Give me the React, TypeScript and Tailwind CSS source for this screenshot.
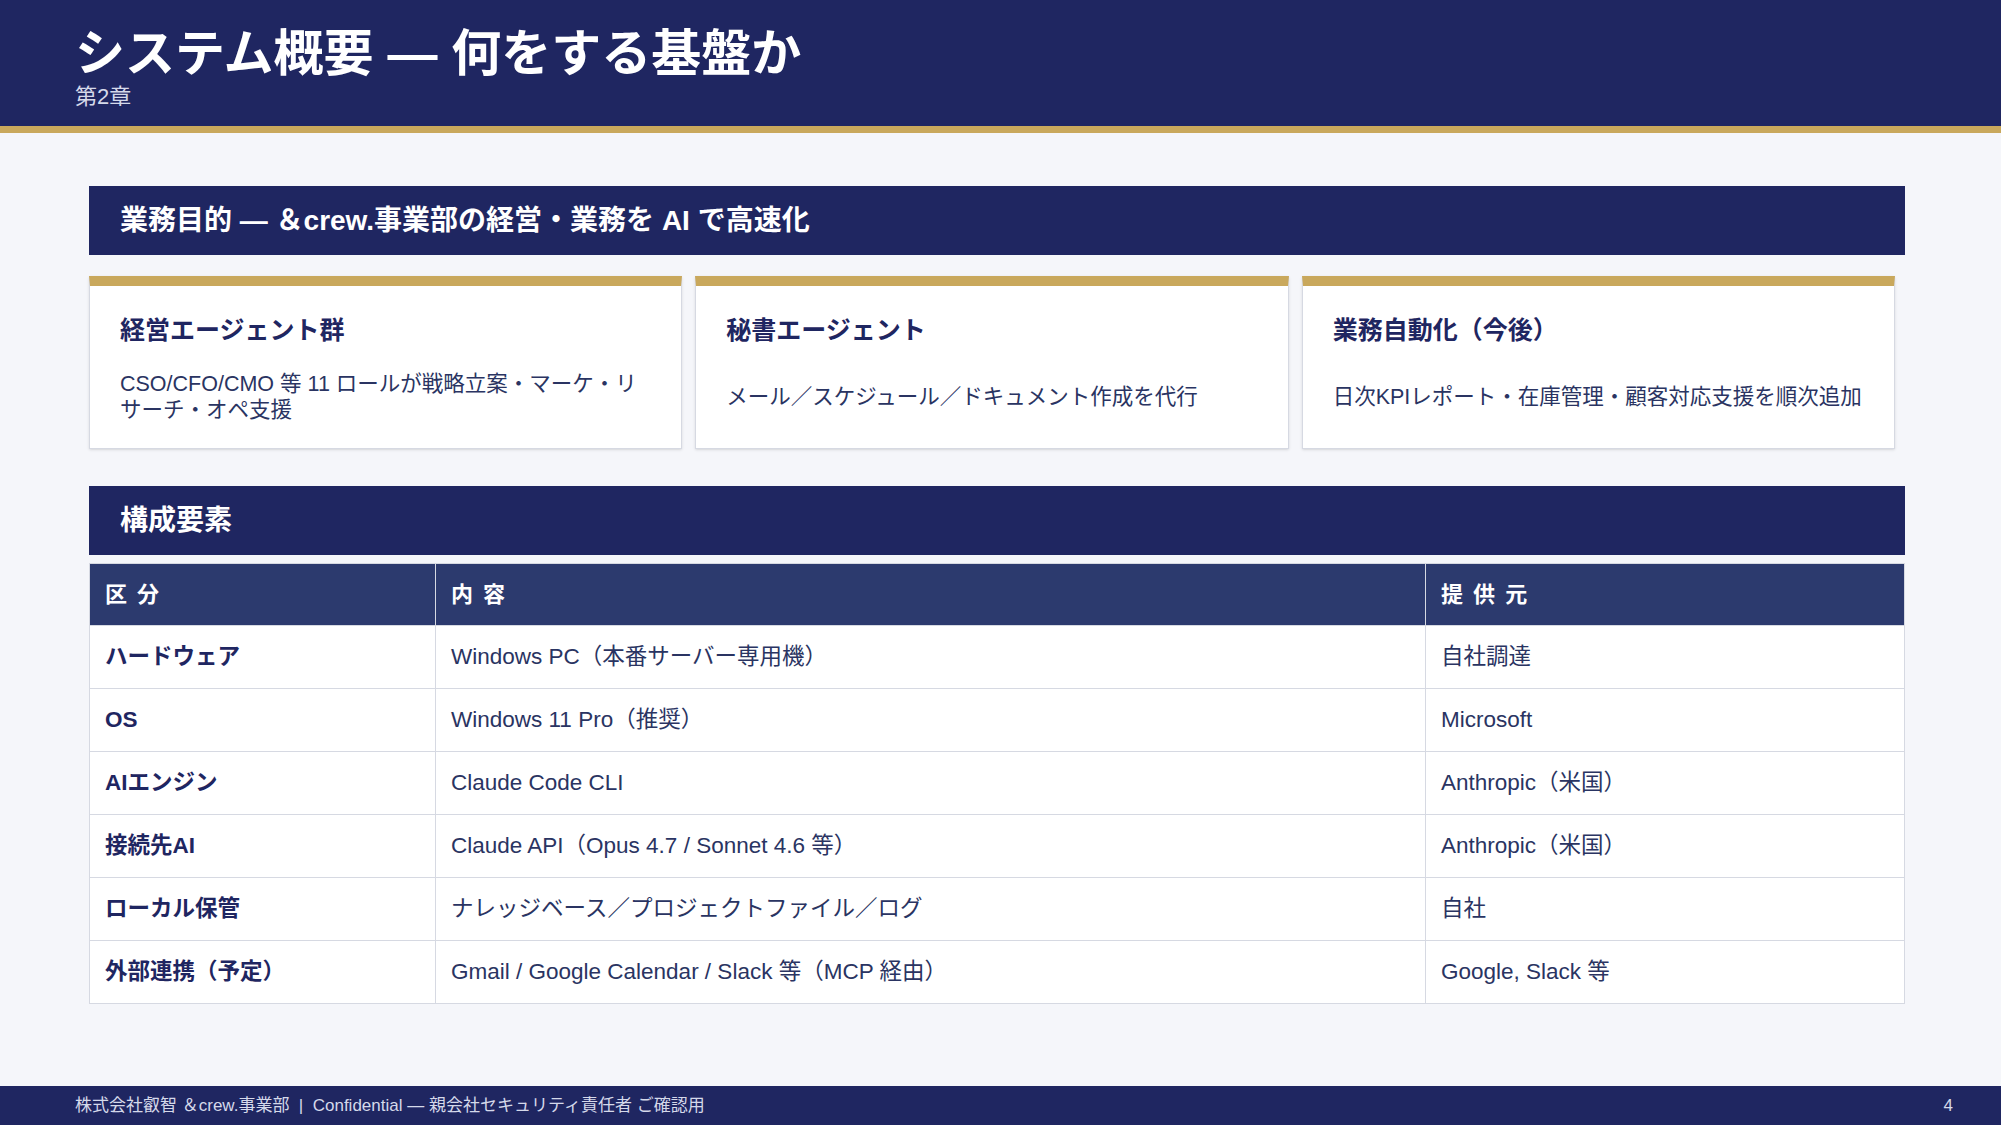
import React from "react";

const F = { fontFamily: '"Liberation Sans", "Noto Sans CJK JP", sans-serif' };

const cards = [
  { t: "経営エージェント群", b: "CSO/CFO/CMO 等 11 ロールが戦略立案・マーケ・リサーチ・オペ支援" },
  { t: "秘書エージェント", b: "メール／スケジュール／ドキュメント作成を代行" },
  { t: "業務自動化（今後）", b: "日次KPIレポート・在庫管理・顧客対応支援を順次追加" },
];

const rows = [
  ["ハードウェア", "Windows PC（本番サーバー専用機）", "自社調達"],
  ["OS", "Windows 11 Pro（推奨）", "Microsoft"],
  ["AIエンジン", "Claude Code CLI", "Anthropic（米国）"],
  ["接続先AI", "Claude API（Opus 4.7 / Sonnet 4.6 等）", "Anthropic（米国）"],
  ["ローカル保管", "ナレッジベース／プロジェクトファイル／ログ", "自社"],
  ["外部連携（予定）", "Gmail / Google Calendar / Slack 等（MCP 経由）", "Google, Slack 等"],
];

export default function App() {
  return (
    <div style={F} className="w-[2001px] h-[1125px] bg-[#f5f6fa] flex flex-col overflow-hidden">
      <header className="h-[126px] shrink-0 bg-[#1f2661] px-[75px] pt-[24px]">
        <h1 className="text-white text-[50px] font-bold leading-[60px]">システム概要 — 何をする基盤か</h1>
        <div className="text-[#d5d9ea] text-[22px] leading-[26px]">第2章</div>
      </header>
      <div className="h-[7px] shrink-0 bg-[#c9a85c]" />
      <main className="flex-1 pl-[89px] pr-[96px] pt-[53px] text-[#1f2661]">
        <div className="h-[69px] bg-[#1f2661] text-white text-[28px] font-bold flex items-center pl-[31px]">
          業務目的 — ＆crew.事業部の経営・業務を AI で高速化
        </div>
        <div className="flex gap-[13px] mt-[21px] pr-[10px]">
          {cards.map((c) => (
            <div key={c.t} className="flex-1 h-[173px] bg-white border border-[#d6d9e2] border-t-[10px] border-t-[#c9a85c] shadow-sm px-[30px] flex flex-col">
              <div className="text-[25px] font-bold mt-[28px] leading-[32px]">{c.t}</div>
              <div className="flex-1 flex items-center text-[21.5px] leading-[26px] text-[#2a3462]">{c.b}</div>
            </div>
          ))}
        </div>
        <div className="h-[69px] mt-[37px] bg-[#1f2661] text-white text-[28px] font-bold flex items-center pl-[31px]">
          構成要素
        </div>
        <table className="w-full mt-[8px] border-collapse text-[22.5px] bg-white">
          <colgroup>
            <col className="w-[346px]" />
            <col className="w-[990px]" />
            <col />
          </colgroup>
          <thead>
            <tr className="h-[62px] bg-[#2c3a6e] text-white font-bold text-left">
              {["区 分", "内 容", "提 供 元"].map((h) => (
                <th key={h} className="border border-[#d6d9e2] px-[15px] font-bold tracking-[2px] text-[22px]">{h}</th>
              ))}
            </tr>
          </thead>
          <tbody>
            {rows.map((r) => (
              <tr key={r[0]} className="h-[63px]">
                <td className="border border-[#d6d9e2] px-[15px] font-bold">{r[0]}</td>
                <td className="border border-[#d6d9e2] px-[15px] text-[#2a3462]">{r[1]}</td>
                <td className="border border-[#d6d9e2] px-[15px] text-[#2a3462]">{r[2]}</td>
              </tr>
            ))}
          </tbody>
        </table>
      </main>
      <footer className="h-[39px] shrink-0 bg-[#1f2661] text-[#d5d9ea] text-[17px] flex items-center justify-between pl-[75px] pr-[48px]">
        <span className="whitespace-pre">株式会社叡智 ＆crew.事業部  |  Confidential — 親会社セキュリティ責任者 ご確認用</span>
        <span>4</span>
      </footer>
    </div>
  );
}
